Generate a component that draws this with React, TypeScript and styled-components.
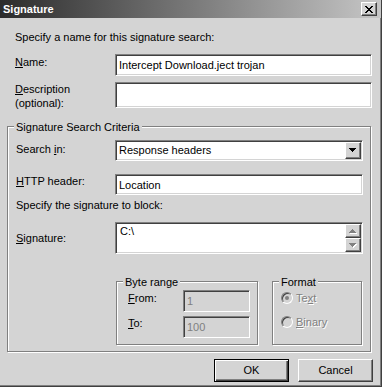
import styled, { createGlobalStyle, css } from "styled-components";

const face = "#d4d4d4";
const shadow = "#808080";
const dark = "#404040";
const light = "#ffffff";

const GlobalStyle = createGlobalStyle`
  html, body {
    margin: 0;
    padding: 0;
    background: ${face};
  }
  body {
    font-family: "Liberation Sans", Arial, sans-serif;
    font-size: 11px;
    color: #000;
  }
`;

// classic 3D edges
const sunken = css`
  box-sizing: border-box;
  border: 1px solid;
  border-color: ${shadow} ${light} ${light} ${shadow};
  box-shadow: inset 1px 1px 0 ${dark}, inset -1px -1px 0 ${face};
`;

const raised = css`
  box-sizing: border-box;
  border: 1px solid;
  border-color: ${light} ${dark} ${dark} ${light};
  box-shadow: inset -1px -1px 0 ${shadow};
  background: ${face};
`;

const Window = styled.div`
  box-sizing: border-box;
  width: 382px;
  height: 387px;
  display: flex;
  flex-direction: column;
  background: ${face};
  border-right: 1px solid ${dark};
  border-bottom: 1px solid ${dark};
  box-shadow: inset -1px -1px 0 ${shadow};
`;

const TitleBar = styled.div`
  height: 18px;
  display: flex;
  align-items: center;
  justify-content: space-between;
  padding: 0 4px 0 3px;
  background: linear-gradient(90deg, #2c2c2c 0%, #c6c6c6 100%);
`;

const TitleText = styled.span`
  padding-top: 1px;
  font-weight: bold;
  font-size: 11px;
  line-height: 17px;
  color: ${light};
`;

const CloseButton = styled.div`
  ${raised};
  width: 16px;
  height: 14px;
  display: flex;
  align-items: center;
  justify-content: center;
`;

const Body = styled.div`
  display: flex;
  flex-direction: column;
  padding: 13px 9px 0 7px;
`;

const TopSection = styled.div`
  display: flex;
  flex-direction: column;
  padding-left: 8px;
`;

const Line = styled.div<{ $mb?: number }>`
  line-height: 13px;
  margin-bottom: ${({ $mb }) => $mb ?? 0}px;
`;

const FieldRow = styled.div<{ $label: number; $mb?: number }>`
  display: grid;
  grid-template-columns: ${({ $label }) => $label}px 1fr;
  margin-bottom: ${({ $mb }) => $mb ?? 0}px;
`;

const Label = styled.div<{ $offset?: number; $lh?: number }>`
  padding-top: ${({ $offset }) => $offset ?? 0}px;
  line-height: ${({ $lh }) => $lh ?? 13}px;
`;

const U = styled.span`
  text-decoration: underline;
`;

const TextInput = styled.input<{ $h: number; $disabled?: boolean }>`
  ${sunken};
  width: 100%;
  height: ${({ $h }) => $h}px;
  margin: 0;
  padding: 0 3px;
  font: inherit;
  font-size: 11px;
  outline: none;
  color: ${({ $disabled }) => ($disabled ? shadow : "#000")};
  background: ${({ $disabled }) => ($disabled ? face : light)};
`;

const GroupBox = styled.div`
  position: relative;
  box-sizing: border-box;
  border: 1px solid ${shadow};
  box-shadow: inset 1px 1px 0 ${light}, 1px 1px 0 ${light};
`;

const Caption = styled.span`
  position: absolute;
  top: -6px;
  left: 6px;
  padding: 0 2px;
  line-height: 13px;
  background: ${face};
  white-space: nowrap;
`;

const CriteriaGroup = styled(GroupBox)`
  margin: 16px 1px 0 0;
  padding: 13px 7px 6px 8px;
  display: flex;
  flex-direction: column;
`;

const Combo = styled.div`
  ${sunken};
  height: 21px;
  display: flex;
  align-items: center;
  justify-content: space-between;
  padding: 1px 1px 1px 2px;
  background: ${light};
`;

const ComboText = styled.span`
  line-height: 13px;
  padding-left: 1px;
`;

const DropButton = styled.div`
  ${raised};
  width: 16px;
  height: 17px;
  display: flex;
  align-items: center;
  justify-content: center;
`;

const MemoBox = styled.div`
  ${sunken};
  height: 32px;
  display: flex;
  padding: 1px;
  background: ${light};
`;

const MemoText = styled.div`
  flex: 1;
  padding: 1px 3px 0 3px;
  line-height: 13px;
`;

const ScrollBar = styled.div`
  width: 16px;
  display: flex;
  flex-direction: column;
`;

const ScrollButton = styled.div`
  ${raised};
  height: 14px;
  display: flex;
  align-items: center;
  justify-content: center;
`;

const SubGroups = styled.div`
  display: flex;
  gap: 14px;
  margin-top: 27px;
  padding-left: 100px;
`;

const RangeGroup = styled(GroupBox)`
  width: 142px;
  height: 64px;
  padding: 8px 0 0 11px;
  display: grid;
  grid-template-columns: 55px 67px;
  grid-auto-rows: 22px;
  row-gap: 4px;
`;

const FormatGroup = styled(GroupBox)`
  width: 90px;
  height: 64px;
  padding: 10px 0 0 8px;
  display: flex;
  flex-direction: column;
  gap: 12px;
`;

const RadioRow = styled.div`
  display: flex;
  align-items: center;
  gap: 3px;
  height: 12px;
`;

const RadioCircle = styled.span<{ $checked?: boolean }>`
  box-sizing: border-box;
  width: 12px;
  height: 12px;
  border-radius: 50%;
  border: 1px solid;
  border-color: ${shadow} ${light} ${light} ${shadow};
  box-shadow: inset 1px 1px 0 ${dark}, inset -1px -1px 0 ${face};
  background: ${face};
  display: flex;
  align-items: center;
  justify-content: center;

  &::after {
    content: "";
    width: 4px;
    height: 4px;
    border-radius: 50%;
    background: ${({ $checked }) => ($checked ? shadow : "transparent")};
  }
`;

const DisabledText = styled.span`
  line-height: 13px;
  color: ${shadow};
  text-shadow: 1px 1px 0 ${light};
`;

const ButtonRow = styled.div`
  display: flex;
  justify-content: flex-end;
  gap: 9px;
  margin: 7px -1px 0 0;
`;

const Button = styled.div<{ $default?: boolean }>`
  ${raised};
  width: 75px;
  height: 23px;
  display: flex;
  align-items: center;
  justify-content: center;
  line-height: 13px;

  ${({ $default }) =>
    $default &&
    css`
      border: 1px solid #000;
      box-shadow: inset 1px 1px 0 ${light}, inset -1px -1px 0 ${dark},
        inset -2px -2px 0 ${shadow};
    `}
`;

const CloseGlyph = () => (
  <svg width="8" height="7" viewBox="0 0 8 7" shapeRendering="crispEdges">
    <path
      fill="#000"
      d="M0 0h2v1H0zM6 0h2v1H6zM1 1h2v1H1zM5 1h2v1H5zM2 2h4v1H2zM3 3h2v1H3zM2 4h4v1H2zM1 5h2v1H1zM5 5h2v1H5zM0 6h2v1H0zM6 6h2v1H6z"
    />
  </svg>
);

const Arrow = ({ up, color, embossed }: { up?: boolean; color: string; embossed?: boolean }) => {
  const d = up ? "M3 0h1v1H3zM2 1h3v1H2zM1 2h5v1H1zM0 3h7v1H0z" : "M0 0h7v1H0zM1 1h5v1H1zM2 2h3v1H2zM3 3h1v1H3z";
  return (
    <svg width="8" height="5" viewBox="0 0 8 5" shapeRendering="crispEdges">
      {embossed && <path fill={light} d={d} transform="translate(1 1)" />}
      <path fill={color} d={d} />
    </svg>
  );
};

export default function App() {
  return (
    <>
      <GlobalStyle />
      <Window>
        <TitleBar>
          <TitleText>Signature</TitleText>
          <CloseButton>
            <CloseGlyph />
          </CloseButton>
        </TitleBar>

        <Body>
          <TopSection>
            <Line $mb={10}>Specify a name for this signature search:</Line>
            <FieldRow $label={100} $mb={6}>
              <Label $offset={2}>
                <U>N</U>ame:
              </Label>
              <TextInput $h={22} readOnly value="Intercept Download.ject trojan" />
            </FieldRow>
            <FieldRow $label={100}>
              <Label $lh={14}>
                <U>D</U>escription
                <br />
                (optional):
              </Label>
              <TextInput $h={26} readOnly value="" />
            </FieldRow>
          </TopSection>

          <CriteriaGroup>
            <Caption>Signature Search Criteria</Caption>
            <FieldRow $label={99} $mb={13}>
              <Label $offset={3}>
                Search <U>i</U>n:
              </Label>
              <Combo>
                <ComboText>Response headers</ComboText>
                <DropButton>
                  <Arrow color="#000" />
                </DropButton>
              </Combo>
            </FieldRow>
            <FieldRow $label={99} $mb={4}>
              <Label $offset={1}>
                <U>H</U>TTP header:
              </Label>
              <TextInput $h={21} readOnly value="Location" />
            </FieldRow>
            <Line $mb={10}>Specify the signature to block:</Line>
            <FieldRow $label={99}>
              <Label $offset={10}>
                <U>S</U>ignature:
              </Label>
              <MemoBox>
                <MemoText>C:\</MemoText>
                <ScrollBar>
                  <ScrollButton>
                    <Arrow up color={shadow} embossed />
                  </ScrollButton>
                  <ScrollButton>
                    <Arrow color={shadow} embossed />
                  </ScrollButton>
                </ScrollBar>
              </MemoBox>
            </FieldRow>

            <SubGroups>
              <RangeGroup>
                <Caption>Byte range</Caption>
                <Label $offset={2}>
                  <U>F</U>rom:
                </Label>
                <TextInput $h={22} $disabled readOnly value="1" />
                <Label $offset={1}>
                  <U>T</U>o:
                </Label>
                <TextInput $h={22} $disabled readOnly value="100" />
              </RangeGroup>
              <FormatGroup>
                <Caption>Format</Caption>
                <RadioRow>
                  <RadioCircle $checked />
                  <DisabledText>
                    Te<U>x</U>t
                  </DisabledText>
                </RadioRow>
                <RadioRow>
                  <RadioCircle />
                  <DisabledText>
                    <U>B</U>inary
                  </DisabledText>
                </RadioRow>
              </FormatGroup>
            </SubGroups>
          </CriteriaGroup>

          <ButtonRow>
            <Button $default>OK</Button>
            <Button>Cancel</Button>
          </ButtonRow>
        </Body>
      </Window>
    </>
  );
}
